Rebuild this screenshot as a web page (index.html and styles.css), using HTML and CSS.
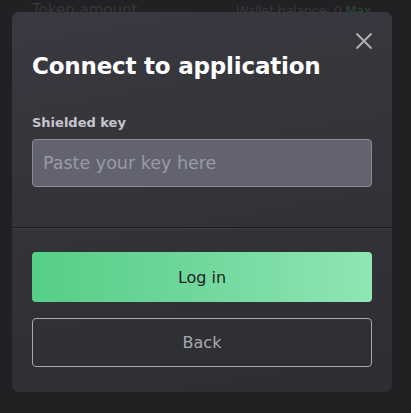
FILE: index.html
```html
<!DOCTYPE html>
<html>
<head>
<meta charset="utf-8">
<link rel="stylesheet" href="styles.css">
</head>
<body>
<div class="page">
  <div class="bg-row">
    <span class="bg-label">Token amount</span>
    <span class="bg-balance">Wallet balance: 0 <span class="bg-max">Max</span></span>
  </div>
  <div class="modal">
    <button class="close" aria-label="Close">
      <svg width="18" height="18" viewBox="0 0 18 18"><path d="M2 2L16 16M16 2L2 16" stroke="#b4b4b8" stroke-width="1.8" stroke-linecap="round" fill="none"/></svg>
    </button>
    <div class="modal-head">
      <h1 class="title">Connect to application</h1>
      <label class="field-label">Shielded key</label>
      <input class="field" type="text" placeholder="Paste your key here">
    </div>
    <div class="modal-foot">
      <button class="btn btn-primary">Log in</button>
      <button class="btn btn-outline">Back</button>
    </div>
  </div>
</div>
</body>
</html>
```
FILE: styles.css
```css
* { box-sizing: border-box; }
html, body { margin: 0; padding: 0; }
body {
  background: #212123;
  font-family: "DejaVu Sans", "Noto Sans", sans-serif;
  width: 411px;
  height: 413px;
  overflow: hidden;
}
.page { position: relative; width: 411px; height: 413px; }
.bg-row {
  display: flex;
  justify-content: space-between;
  align-items: baseline;
  padding: 0 40px 0 32px;
  font-size: 15px;
  line-height: 20px;
  color: #37373c;
  font-weight: 400;
}
.bg-balance { font-size: 13px; letter-spacing: -0.4px; }
.bg-max { color: #2a4a36; }
.modal {
  position: absolute;
  left: 12px;
  top: 12px;
  width: 380px;
  height: 380px;
  border-radius: 7px;
  background: linear-gradient(170deg, #393a41 0%, #333439 45%, #2d2e32 100%);
  display: flex;
  flex-direction: column;
  overflow: hidden;
}
.close {
  position: absolute;
  top: 20px;
  right: 19px;
  width: 18px;
  height: 18px;
  padding: 0;
  border: 0;
  background: none;
  display: flex;
}
.modal-head {
  display: flex;
  flex-direction: column;
  padding: 39px 20px 40px;
  border-bottom: 1px solid #1d1d20;
}
.title {
  margin: 0;
  font-size: 23px;
  line-height: 30px;
  font-weight: 700;
  color: #ffffff;
  letter-spacing: -0.2px;
}
.field-label {
  margin-top: 33px;
  font-size: 13px;
  line-height: 18px;
  font-weight: 600;
  color: #c6c6cb;
}
.field {
  margin-top: 7px;
  height: 48px;
  border: 1px solid #8b8b96;
  border-radius: 4px;
  background: #636370;
  padding: 0 10px;
  font-family: inherit;
  font-size: 17.5px;
  color: #e0e0e4;
  outline: none;
}
.field::placeholder { color: #9a9aa6; }
.modal-foot {
  display: flex;
  flex-direction: column;
  gap: 16px;
  padding: 23px 20px 0;
  border-top: 1px solid #3a3b40;
}
.btn {
  height: 50px;
  border-radius: 4px;
  font-family: inherit;
  font-size: 16px;
  font-weight: 500;
  padding: 0;
}
.btn-primary {
  border: 0;
  background: linear-gradient(90deg, #55cf86 0%, #6fd69b 45%, #8fe6b5 100%);
  color: #1f2421;
}
.btn-outline {
  border: 1px solid #a9a9ae;
  background: transparent;
  color: #a9a9ae;
  height: 49px;
}
```
